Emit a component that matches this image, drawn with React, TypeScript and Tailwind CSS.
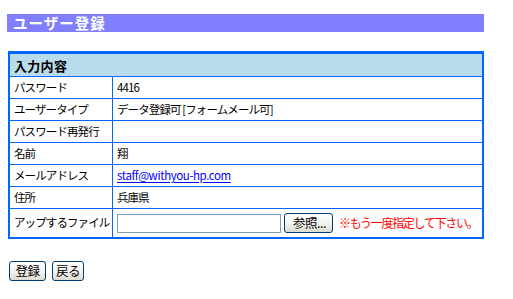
import type { ReactNode } from "react";

const FONT = "font-['MS_UI_Gothic','Noto_Sans_CJK_JP',sans-serif]";

const ROWS: { label: string; value: ReactNode }[] = [
  { label: "パスワード", value: "4416" },
  { label: "ユーザータイプ", value: "データ登録可 [フォームメール可]" },
  { label: "パスワード再発行", value: "" },
  { label: "名前", value: "翔" },
  {
    label: "メールアドレス",
    value: (
      <a href="#" className="tracking-[-0.4px] text-[#0000ff] underline underline-offset-2">
        staff@withyou-hp.com
      </a>
    ),
  },
  { label: "住所", value: "兵庫県" },
];

function XpButton({ children, className = "" }: { children: ReactNode; className?: string }) {
  return (
    <button
      type="button"
      className={`h-[20px] shrink-0 whitespace-nowrap rounded-[3px] border border-[#003c74] bg-gradient-to-b from-white via-[#f4f4f0] to-[#dcdcd2] px-0 text-[12.5px] leading-none tracking-[-0.5px] text-black ${className}`}
    >
      {children}
    </button>
  );
}

function Row({ label, children, tall }: { label: string; children: ReactNode; tall?: boolean }) {
  return (
    <div className={`flex border-t border-[#0066ff] ${tall ? "h-[29px]" : "h-[22px]"}`}>
      <div className="flex w-[103px] shrink-0 items-center whitespace-nowrap border-r border-[#0066ff] px-[4px]">
        {label}
      </div>
      <div className="flex min-w-0 flex-1 items-center whitespace-nowrap px-[4px]">{children}</div>
    </div>
  );
}

export default function App() {
  return (
    <div className={`min-h-[299px] bg-white px-[7px] pt-[14px] text-[11.5px] leading-none tracking-[-0.9px] text-black ${FONT}`}>
      <h1 className="flex h-[18px] w-[477px] items-center bg-[#8080ff] pl-[6px] text-[14.5px] font-bold tracking-[1px] text-white">
        ユーザー登録
      </h1>

      <div className="ml-px mt-[19px] w-[476px] border-x-2 border-b-2 border-t-[3px] border-[#0066ff]">
        <div className="flex h-[22px] items-center bg-[#b8dcec] px-[4px] text-[13px] font-bold tracking-[0.3px]">
          入力内容
        </div>
        {ROWS.map((r) => (
          <Row key={r.label} label={r.label}>
            {r.value}
          </Row>
        ))}
        <Row label="アップするファイル" tall>
          <div className="h-[19px] w-[164px] shrink-0 border border-[#7f9db9] bg-white" />
          <XpButton className="ml-[3px] w-[49px] pl-[8px] text-left">参照...</XpButton>
          <span className="ml-[6px] text-[12px] tracking-[-1.3px] text-[#ff0000]">※もう一度指定して下さい。</span>
        </Row>
      </div>

      <div className="ml-[2px] mt-[22px] flex gap-[6px]">
        <XpButton className="w-[37px]">登録</XpButton>
        <XpButton className="w-[32px]">戻る</XpButton>
      </div>
    </div>
  );
}
